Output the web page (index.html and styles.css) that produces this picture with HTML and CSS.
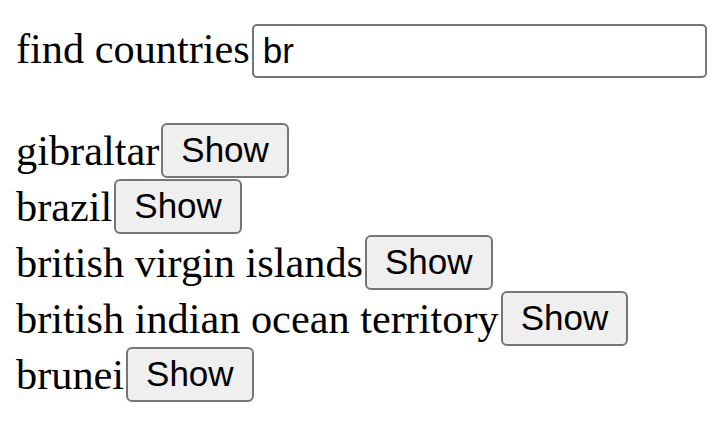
FILE: index.html
```html
<!DOCTYPE html>
<html>
<head>
<meta charset="utf-8">
<link rel="stylesheet" href="styles.css">
</head>
<body>
<div class="search">find countries<input class="search-input" value="br"></div>
<div class="list">
  <div class="row">gibraltar<button class="show">Show</button></div>
  <div class="row">brazil<button class="show">Show</button></div>
  <div class="row">british virgin islands<button class="show">Show</button></div>
  <div class="row">british indian ocean territory<button class="show">Show</button></div>
  <div class="row">brunei<button class="show">Show</button></div>
</div>
</body>
</html>
```
FILE: styles.css
```css
html, body {
  background: #ffffff;
}
body {
  margin: 0;
  padding: 24px 16px 0 16px;
  font-family: "Liberation Serif", "Times New Roman", serif;
  font-size: 42.3px;
  color: #000000;
}
.search {
  display: flex;
  align-items: baseline;
}
.search-input {
  box-sizing: border-box;
  width: 455px;
  height: 54px;
  margin: 0 0 0 2px;
  padding: 0 9px;
  font-family: "Liberation Sans", Arial, sans-serif;
  font-size: 35px;
  color: #000000;
  border: 2px solid #767676;
  border-radius: 5px;
  background: #ffffff;
  outline: none;
}
.list {
  margin-top: 44px;
}
.row {
  display: flex;
  align-items: center;
  height: 56px;
}
.show {
  box-sizing: border-box;
  height: 55px;
  margin: 0 0 0 2px;
  padding: 0 18px;
  font-family: "Liberation Sans", Arial, sans-serif;
  font-size: 35px;
  color: #000000;
  background: #efefef;
  border: 2px solid #767676;
  border-radius: 6px;
}
```
